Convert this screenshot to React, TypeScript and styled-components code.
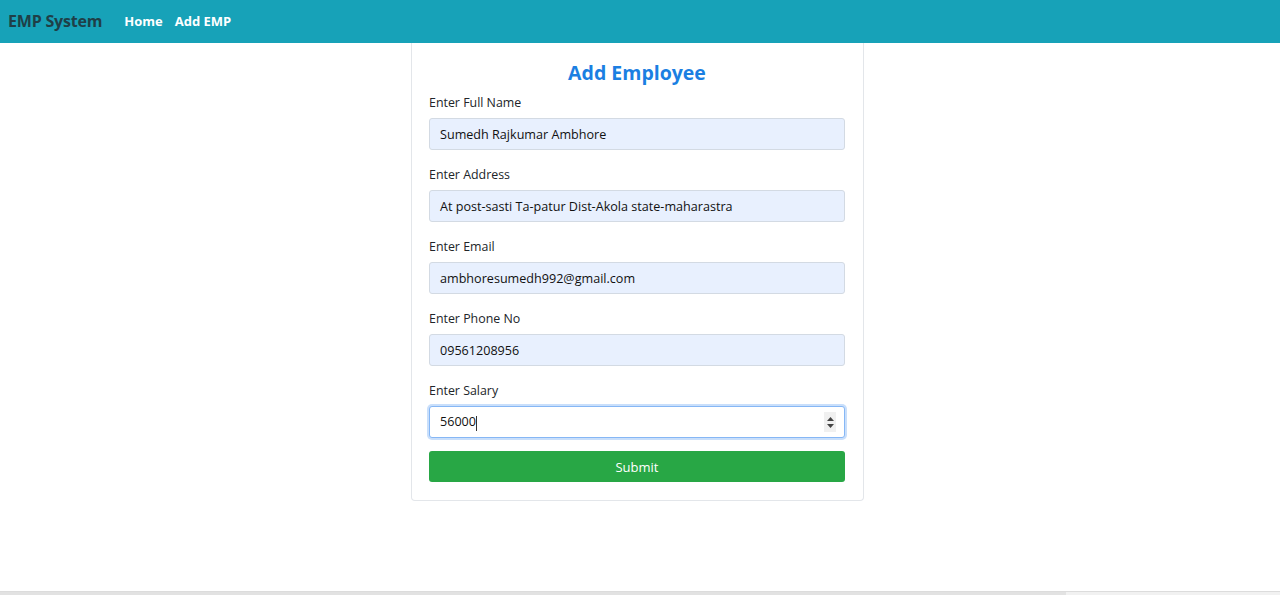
import React from "react";
import styled, { createGlobalStyle } from "styled-components";

const Global = createGlobalStyle`
  html, body { margin: 0; padding: 0; background: #fff; }
  body { font-family: "Open Sans", "Noto Sans", sans-serif; color: #212529; }
  * { box-sizing: border-box; }
`;

const Page = styled.div`
  width: 1280px;
  height: 595px;
  display: flex;
  flex-direction: column;
  overflow: hidden;
`;

const Navbar = styled.nav`
  height: 43px;
  background: #17a2b8;
  display: flex;
  align-items: center;
  padding: 0 8px 2px;
  flex-shrink: 0;
`;

const Brand = styled.span`
  font-size: 16px;
  font-weight: 700;
  color: #1f3f47;
  margin-right: 22px;
  letter-spacing: -0.2px;
`;

const NavLink = styled.a`
  font-size: 13px;
  font-weight: 700;
  color: #fff;
  margin-right: 12px;
  text-decoration: none;
`;

const Main = styled.main`
  flex: 1;
  display: flex;
  justify-content: center;
  padding-right: 5px;
`;

const Card = styled.div`
  width: 453px;
  align-self: flex-start;
  border: 1px solid #e3e6ea;
  border-top: none;
  border-radius: 0 0 4px 4px;
  padding: 18px 18px 18px 17px;
  display: flex;
  flex-direction: column;
`;

const Title = styled.h2`
  margin: 0 0 7px;
  text-align: center;
  font-size: 19.5px;
  font-weight: 700;
  color: #1b7fe2;
  line-height: 24px;
`;

const Group = styled.div<{ $last?: boolean }>`
  display: flex;
  flex-direction: column;
  margin-bottom: ${(p) => (p.$last ? "13px" : "14px")};
`;

const Label = styled.label`
  font-size: 12.4px;
  line-height: 21px;
  margin-bottom: 5px;
  color: #212529;
`;

const Input = styled.div<{ $focused?: boolean }>`
  height: 32px;
  border: 1px solid ${(p) => (p.$focused ? "#86b7f5" : "#d3dae3")};
  border-radius: 3px;
  background: ${(p) => (p.$focused ? "#fff" : "#e8f0fe")};
  box-shadow: ${(p) => (p.$focused ? "0 0 0 2px #c9dffb" : "none")};
  display: flex;
  align-items: center;
  padding: 0 10px;
  font-size: 12.6px;
  color: #111;
`;

const Value = styled.span`
  flex: 1;
`;

const Caret = styled.span`
  display: inline-block;
  width: 1px;
  height: 15px;
  background: #333;
  vertical-align: middle;
`;

const Spinner = styled.div`
  width: 12px;
  height: 20px;
  background: #f0f0f0;
  display: flex;
  flex-direction: column;
  align-items: center;
  justify-content: center;
  gap: 3px;
  margin-right: -2px;
`;

const Button = styled.button`
  height: 31px;
  border: none;
  border-radius: 3px;
  background: #28a745;
  color: #fff;
  font-family: inherit;
  font-size: 13px;
`;

const ScrollBar = styled.div`
  height: 4px;
  background: #f1f1f1;
  border-top: 1px solid #dcdcdc;
  flex-shrink: 0;
  display: flex;
`;

const Thumb = styled.div`
  width: 1066px;
  background: #e2e2e2;
`;

const fields = [
  ["Enter Full Name", "Sumedh Rajkumar Ambhore"],
  ["Enter Address", "At post-sasti Ta-patur Dist-Akola state-maharastra"],
  ["Enter Email", "ambhoresumedh992@gmail.com"],
  ["Enter Phone No", "09561208956"],
];

export default function App() {
  return (
    <>
      <Global />
      <Page>
        <Navbar>
          <Brand>EMP System</Brand>
          <NavLink>Home</NavLink>
          <NavLink>Add EMP</NavLink>
        </Navbar>
        <Main>
          <Card>
            <Title>Add Employee</Title>
            {fields.map(([l, v]) => (
              <Group key={l}>
                <Label>{l}</Label>
                <Input>
                  <Value>{v}</Value>
                </Input>
              </Group>
            ))}
            <Group $last>
              <Label>Enter Salary</Label>
              <Input $focused>
                <Value>
                  56000<Caret />
                </Value>
                <Spinner>
                  <svg width="7" height="4" viewBox="0 0 7 4"><path d="M0 4L3.5 0L7 4Z" fill="#444" /></svg>
                  <svg width="7" height="4" viewBox="0 0 7 4"><path d="M0 0L3.5 4L7 0Z" fill="#444" /></svg>
                </Spinner>
              </Input>
            </Group>
            <Button>Submit</Button>
          </Card>
        </Main>
        <ScrollBar>
          <Thumb />
        </ScrollBar>
      </Page>
    </>
  );
}
